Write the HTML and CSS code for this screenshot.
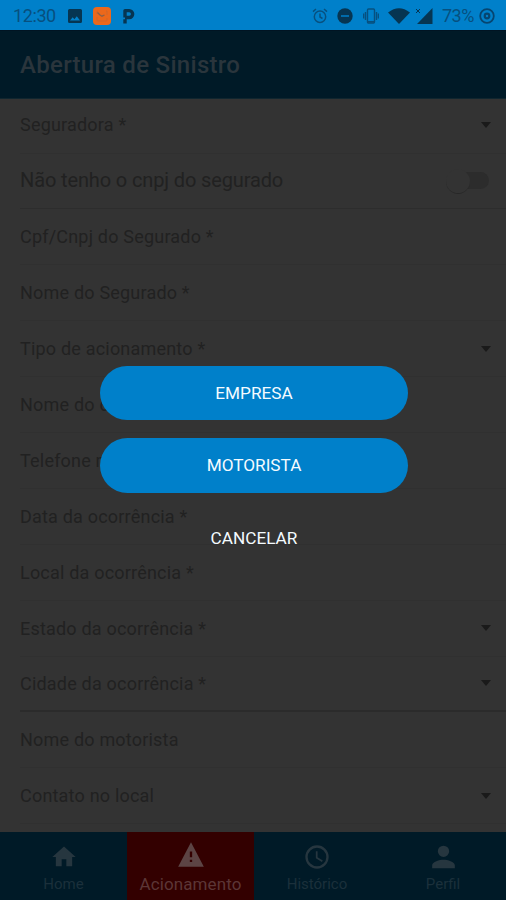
FILE: index.html
```html
<!DOCTYPE html>
<html lang="pt-BR">
<head>
<meta charset="utf-8">
<title>Abertura de Sinistro</title>
<link rel="stylesheet" href="styles.css">
</head>
<body>
<div class="screen">
  <div class="status">
    <span class="clock">12:30</span>
    <svg class="s-image" width="16" height="16" viewBox="0 0 16 16"><path fill="currentColor" fill-rule="evenodd" d="M2.500 1h11A1.500 1.500 0 0 1 15 2.500v11a1.500 1.500 0 0 1-1.500 1.500h-11A1.500 1.500 0 0 1 1 13.500v-11A1.500 1.500 0 0 1 2.500 1zM3 12.500h10L9.800 8.200 7.400 11.200 5.700 9.200z"/></svg>
    <svg class="s-app" width="20" height="20" viewBox="0 0 20 20"><rect x="1" y="1" width="18" height="18" rx="4" fill="#ec681b"/><path d="M5 8V6q0-1 1-1M14 5h1v4M5 11v3q0 1 1 1h8q1 0 1-1v-2" fill="none" stroke="#d0662a" stroke-width="1"/><path d="M5.500 6.500L8 9l2 1.200L12.500 9" fill="none" stroke="#8a6048" stroke-width="1.300"/></svg>
    <svg class="s-p" width="14" height="16" viewBox="0 0 14 16"><path d="M3 15.500v-4.200M3 9.500V2.600h4.200a3.400 3.400 0 0 1 0 6.900H3" fill="none" stroke="currentColor" stroke-width="3.400" stroke-linejoin="round"/></svg>
    <span class="spacer"></span>
    <svg class="s-alarm thin" width="16" height="16" viewBox="0 0 16 16"><g fill="none" stroke="currentColor" stroke-width="1.500"><circle cx="8" cy="8.800" r="5.700"/><path d="M8 5.500v3.500l2.500 1.500M1 3.600L4 1M15 3.600L12 1"/></g></svg>
    <svg class="s-dnd" width="16" height="16" viewBox="0 0 16 16"><circle cx="8" cy="8" r="7.700" fill="currentColor"/><path d="M4 8h8" stroke="#0072b5" stroke-width="1.800"/></svg>
    <svg class="s-vib thin" width="16" height="16" viewBox="0 0 16 16"><g fill="none" stroke="currentColor" stroke-width="1.400"><rect x="4.500" y="1" width="7" height="14" rx="1"/><path d="M2.500 4v8M.6 5.500v5M13.500 4v8M15.400 5.500v5M5 13.800h6"/></g></svg>
    <svg class="s-wifi" width="22" height="16" viewBox="0 0 22 16"><path fill="currentColor" d="M0 4.500Q11-4 22 4.500L11 16z"/></svg>
    <svg class="s-cell" width="18" height="16" viewBox="0 0 18 16"><path fill="currentColor" d="M17.500 0v16H2z"/><path d="M1 1l4 4M5 1L1 5" stroke="currentColor" stroke-width="1"/></svg>
    <span class="percent">73%</span>
    <svg class="s-bat" width="16" height="16" viewBox="0 0 16 16"><g fill="none" stroke="currentColor"><circle cx="8" cy="8" r="6.800" stroke-width="1.800"/><circle cx="8" cy="8" r="2.300" stroke-width="2.200"/></g></svg>
  </div>
  <header class="header">Abertura de Sinistro</header>
  <main class="form">
    <div class="row select first"><span>Seguradora *</span></div>
    <div class="row toggle-row"><span>Não tenho o cnpj do segurado</span><i class="toggle"></i></div>
    <div class="row"><span>Cpf/Cnpj do Segurado *</span></div>
    <div class="row"><span>Nome do Segurado *</span></div>
    <div class="row select"><span>Tipo de acionamento *</span></div>
    <div class="row"><span>Nome do condutor *</span></div>
    <div class="row"><span>Telefone motorista *</span></div>
    <div class="row"><span>Data da ocorrência *</span></div>
    <div class="row"><span>Local da ocorrência *</span></div>
    <div class="row select"><span>Estado da ocorrência *</span></div>
    <div class="row strong select"><span>Cidade da ocorrência *</span></div>
    <div class="row"><span>Nome do motorista</span></div>
    <div class="row select"><span>Contato no local</span></div>
  </main>
  <nav class="tabs">
    <div class="tab"><svg width="28" height="28" viewBox="0 0 24 24"><path fill="currentColor" d="M10 20v-6h4v6h5v-8h3L12 3 2 12h3v8z"/></svg><span>Home</span></div>
    <div class="tab active"><svg width="28" height="28" viewBox="0 0 24 24"><path fill="currentColor" d="M1 22h22L12 1 1 22zm12-4h-2v-2h2v2zm0-4h-2v-5h2v5z"/></svg><span>Acionamento</span></div>
    <div class="tab"><svg width="28" height="28" viewBox="0 0 24 24"><path fill="currentColor" d="M12 2a10 10 0 1 0 0 20 10 10 0 0 0 0-20zm0 18a8 8 0 1 1 0-16 8 8 0 0 1 0 16zm.5-13H11v6l5.200 3.200.8-1.300-4.500-2.700z"/></svg><span>Histórico</span></div>
    <div class="tab"><svg width="35" height="34" viewBox="0 0 24 24"><path fill="currentColor" d="M12 12a4 4 0 1 0 0-8 4 4 0 0 0 0 8zm0 2c-2.700 0-8 1.300-8 4v2h16v-2c0-2.700-5.300-4-8-4z"/></svg><span>Perfil</span></div>
  </nav>
  <div class="sheet">
    <button class="pill">EMPRESA</button>
    <button class="pill">MOTORISTA</button>
    <button class="cancel">CANCELAR</button>
  </div>
</div>
</body>
</html>
```
FILE: styles.css
```css
* { box-sizing: border-box; }
body { margin: 0; background: #333; font-family: Roboto, "Liberation Sans", sans-serif; }
.screen { position: relative; width: 506px; height: 900px; overflow: hidden; display: flex; flex-direction: column; background: #333; }
.screen svg { display: block; flex: none; }
.status { height: 30px; flex: none; display: flex; align-items: center; padding: 2px 11px 0 13px; background: #0080ca; color: #063552; }
.clock, .percent { font-size: 18px; line-height: 28px; color: #07507f; }
.clock { width: 43px; letter-spacing: -.4px; }
.percent { width: 34px; margin-left: 9px; letter-spacing: -.5px; }
.thin { color: #07507f; }
.s-image { margin-left: 11px; }
.s-app { margin-left: 9px; }
.s-p { margin-left: 10px; }
.spacer { flex: 1; }
.s-dnd { margin-left: 9px; }
.s-vib { margin-left: 10px; }
.s-wifi { margin-left: 9px; }
.s-cell { margin-left: 5px; }
.s-bat { color: #064570; margin-left: 3px; }
.header { height: 69px; flex: none; padding-left: 20px; line-height: 68px; font-size: 24px; font-weight: 500; letter-spacing: .3px; background: #001a27; color: #2a353c; border-top: 1px solid #001422; border-bottom: 1px solid #10262f; }
.form { height: 733px; flex: none; padding-left: 20px; overflow: hidden; }
.row { height: 55.9px; display: flex; align-items: center; justify-content: space-between; padding: 0 15px 0 0; font-size: 18px; letter-spacing: .2px; color: #212121; border-bottom: 1px solid #303030; }
.row.first { height: 54.5px; padding-bottom: 2px; }
.row.strong { border-bottom: 2px solid #2b2b2b; }
.row.toggle-row { padding-bottom: 2px; font-size: 20px; letter-spacing: -.13px; border-color: #2d2d2d; }
.select::after { content: ""; border: 5.500px solid transparent; border-top: 6px solid #1a1a1a; border-bottom: 0; }
.toggle { position: relative; width: 42px; height: 17px; margin-top: 2px; }
.toggle::before { content: ""; position: absolute; inset: 0 2px 0 10px; border-radius: 9px; background: #2c2c2c; }
.toggle::after { content: ""; position: absolute; left: -3px; top: -3px; width: 24px; height: 24px; border-radius: 50%; background: #333; border-bottom: 1px solid #282828; }
.tabs { height: 68px; flex: none; display: grid; grid-template-columns: 127px 127px 126px 126px; background: #001a27; }
.tab { display: flex; flex-direction: column; align-items: center; padding-top: 11px; font-size: 15px; color: #1b303b; }
.tab svg { color: #26363f; height: 28px; }
.tab:last-child svg { height: 34px; margin: -3px 0; }
.tab span { line-height: 26px; }
.tab.active { background: #330000; color: #5c3636; font-size: 17px; letter-spacing: .1px; padding-top: 9px; }
.tab.active svg { color: #5c4444; margin-bottom: 2px; }
.sheet { position: absolute; left: 100px; top: 366px; width: 308px; display: flex; flex-direction: column; gap: 18px; }
.sheet button { height: 54.300px; border: 0; padding: 0; border-radius: 27.500px; background: none; color: #f4fbff; font: 400 17.200px/54px Roboto, "Liberation Sans", sans-serif; }
.sheet .pill { background: #0080ca; }
```
